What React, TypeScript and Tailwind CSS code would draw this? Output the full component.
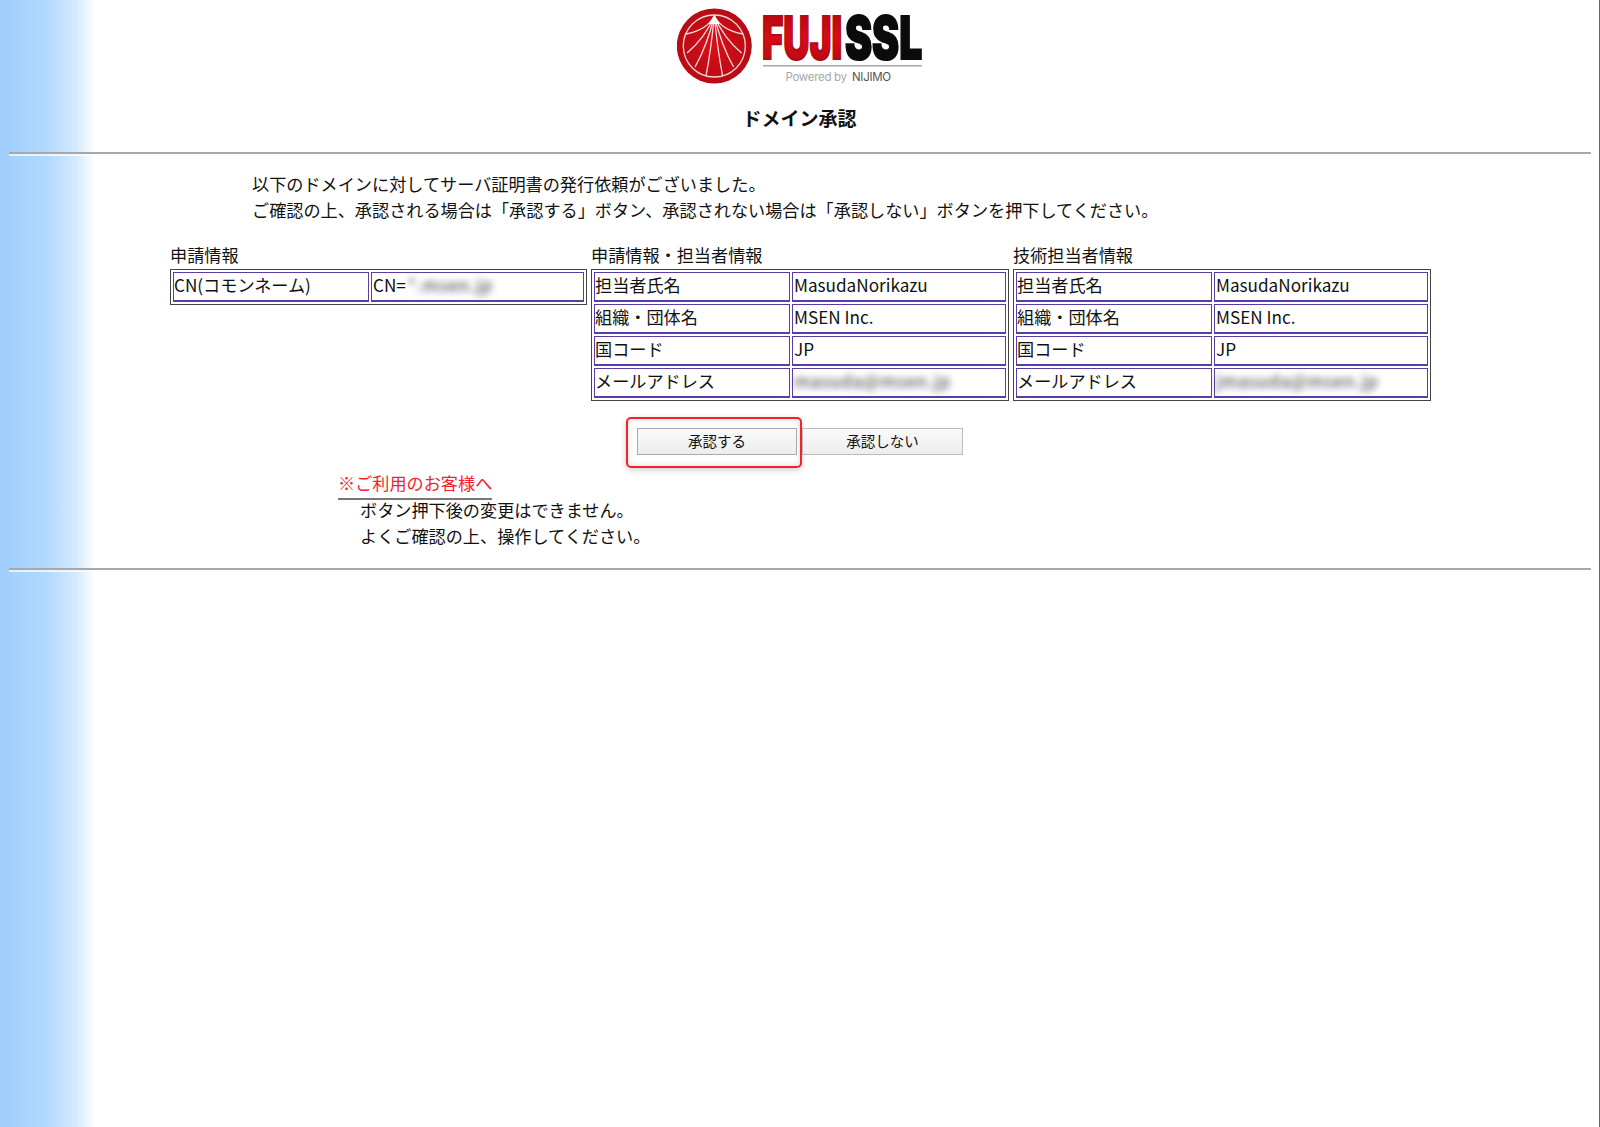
const rays = [
  'M37.3 16 Q30 30 9 34',
  'M37.3 16 Q28 38 10 53',
  'M37.3 16 Q30 46 18 67',
  'M37.3 16 Q34 50 29 76',
  'M37.3 16 Q44.6 30 65.6 34',
  'M37.3 16 Q46.6 38 64.6 53',
  'M37.3 16 Q44.6 46 56.6 67',
  'M37.3 16 Q40.6 50 45.6 76',
];

const person = [
  { label: '担当者氏名', value: 'MasudaNorikazu' },
  { label: '組織・団体名', value: 'MSEN Inc.' },
  { label: '国コード', value: 'JP' },
];

interface InfoTableProps {
  title: string;
  mail: string;
}

const tableClass = 'w-full table-fixed border-separate border-spacing-[2.5px] border border-[#444]';
const cellClass = 'h-[30px] border border-b-2 border-[#5a3ea8] p-0 pb-[3px] align-middle leading-none whitespace-nowrap';
const blurClass = 'font-medium tracking-[0.6px] text-[#555] blur-[3.5px]';

const Logo = () => (
  <svg width="262" height="90" viewBox="0 0 262 90" className="block">
    <defs>
      <linearGradient id="fuji" x1="0" y1="0" x2="0" y2="1">
        <stop offset="0" stopColor="#a5060f" />
        <stop offset="0.5" stopColor="#d70c18" />
        <stop offset="1" stopColor="#a90a12" />
      </linearGradient>
      <radialGradient id="disc">
        <stop offset="0" stopColor="#d80f1a" />
        <stop offset="1" stopColor="#b80b14" />
      </radialGradient>
    </defs>
    <circle cx="37.3" cy="46" r="37.5" fill="url(#disc)" />
    <circle cx="37.3" cy="46" r="31" fill="none" stroke="#f3d5d5" strokeWidth="1.3" />
    <g fill="none" stroke="#f7dcdc" strokeWidth="1.3">
      {rays.map((d) => (
        <path key={d} d={d} />
      ))}
    </g>
    <path d="M37.3 15 L32 24 L42.6 24 Z" fill="#fff" />
    <g fontFamily="Inter, sans-serif" fontWeight="900" fontSize="59" strokeWidth="2">
      <text transform="translate(85 59) scale(0.62 1)" fill="url(#fuji)" stroke="#b30912">FUJI</text>
      <text transform="translate(168 59) scale(0.69 1)" fill="#0b0b0b" stroke="#0b0b0b">SSL</text>
    </g>
    <rect x="86" y="65" width="159" height="1.5" fill="#a8a8a8" />
    <g fontFamily="Inter, sans-serif" fontSize="11.5" letterSpacing="-0.3">
      <text x="108.5" y="81" fill="#a8a8a8">Powered by</text>
      <text x="175" y="81" fill="#555">NIJIMO</text>
    </g>
  </svg>
);

const InfoTable = ({ title, mail }: InfoTableProps) => (
  <div className="w-[418px] shrink-0">
    <div className="h-[26px] leading-[24px]">{title}</div>
    <table className={tableClass}>
      <tbody>
        {person.map((row) => (
          <tr key={row.label}>
            <td className={`${cellClass} w-[196px]`}>{row.label}</td>
            <td className={`${cellClass} pl-[1px]`}>{row.value}</td>
          </tr>
        ))}
        <tr>
          <td className={`${cellClass} w-[196px]`}>メールアドレス</td>
          <td className={`${cellClass} pl-[1px]`}>
            <span className={blurClass}>{mail}</span>
          </td>
        </tr>
      </tbody>
    </table>
  </div>
);

const Rule = () => <div className="ml-[9px] mr-[8px] h-[4px] border-t-2 border-[#a8a8a8] bg-white/70" />;

export default function App() {
  return (
    <div className="min-h-[1127px] border-r border-[#666] bg-[linear-gradient(to_right,#9fcefd_0px,#b0d8fe_45px,#d5eaff_76px,#ffffff_95px)] font-['Noto_Sans_CJK_JP',sans-serif] text-[17.15px] text-[#111]">
      <div className="flex justify-center">
        <div className="ml-[16px]">
          <Logo />
        </div>
      </div>
      <h1 className="mt-[14px] h-[28px] text-center text-[19px] font-bold leading-[28px]">ドメイン承認</h1>
      <div className="mt-[20px]">
        <Rule />
      </div>

      <div className="mt-[15px] pl-[252px] leading-[26px]">
        <p>以下のドメインに対してサーバ証明書の発行依頼がございました。</p>
        <p>ご確認の上、承認される場合は「承認する」ボタン、承認されない場合は「承認しない」ボタンを押下してください。</p>
      </div>

      <div className="mt-[20px] flex gap-[4px] pl-[170px]">
        <div className="w-[417px] shrink-0">
          <div className="h-[26px] leading-[24px]">申請情報</div>
          <table className={tableClass}>
            <tbody>
              <tr>
                <td className={`${cellClass} w-[196px]`}>CN(コモンネーム)</td>
                <td className={`${cellClass} pl-[1px]`}>
                  CN=<span className={`ml-[2px] ${blurClass}`}>*.msen.jp</span>
                </td>
              </tr>
            </tbody>
          </table>
        </div>
        <InfoTable title="申請情報・担当者情報" mail="masuda@msen.jp" />
        <InfoTable title="技術担当者情報" mail="jmasuda@msen.jp" />
      </div>

      <div className="mt-[16px] flex items-start pl-[626px]">
        <div className="rounded-[5px] border-2 border-[#f0222c] pb-[11px] pl-[9px] pr-[3px] pt-[9px] shadow-[0_2px_6px_rgba(0,0,0,0.2),inset_0_0_6px_rgba(0,0,0,0.15)]">
          <button className="block h-[27px] w-[160px] border border-[#aaa] bg-[linear-gradient(#fafafa,#ededed)] text-[14.5px] leading-none">承認する</button>
        </div>
        <button className="mt-[11px] h-[27px] w-[161px] border border-[#bbb] bg-[linear-gradient(#fafafa,#ededed)] text-[14.5px] leading-none">承認しない</button>
      </div>

      <div className="mt-[2px] pl-[338px]">
        <div className="w-fit border-b-2 border-[#777] pb-[2px] leading-[26px] text-[#f5222d]">※ご利用のお客様へ</div>
        <div className="flex flex-col gap-[6px] pl-[22px] leading-[20px]">
          <p>ボタン押下後の変更はできません。</p>
          <p>よくご確認の上、操作してください。</p>
        </div>
      </div>

      <div className="mt-[22px]">
        <Rule />
      </div>
    </div>
  );
}
